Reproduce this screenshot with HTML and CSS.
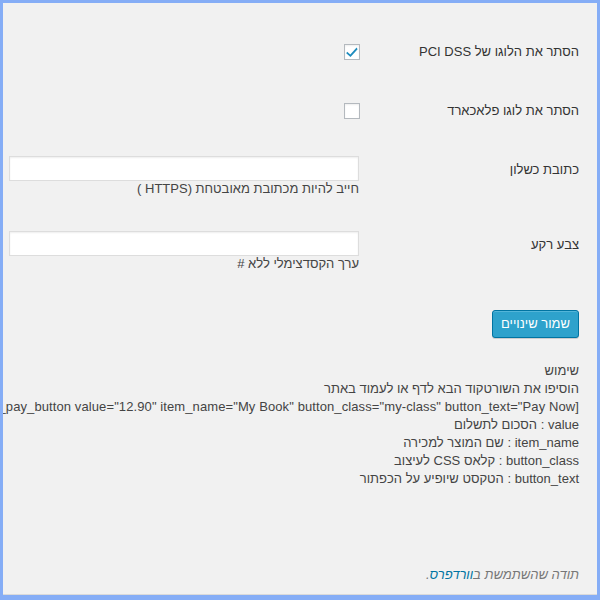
FILE: index.html
```html
<!DOCTYPE html>
<html lang="he" dir="rtl">
<head>
<meta charset="utf-8">
<link rel="stylesheet" href="styles.css">
</head>
<body>
<div class="frame">
  <div class="wrap">
    <div class="row check-row">
      <div class="label">הסתר את הלוגו של PCI DSS</div>
      <div class="field">
        <span class="checkbox">
          <svg width="14" height="14" viewBox="0 0 14 14"><path d="M2.2 6.8 L5.3 9.6 L11.6 2.6 L12.6 4.2 L5.5 12.1 L1.2 8.3 Z" fill="#1e8cbe"/></svg>
        </span>
      </div>
    </div>
    <div class="row check-row">
      <div class="label">הסתר את לוגו פלאכארד</div>
      <div class="field"><span class="checkbox"></span></div>
    </div>
    <div class="row text-row">
      <div class="label text-label">כתובת כשלון</div>
      <div class="field">
        <span class="input"></span>
        <p class="description">חייב להיות מכתובת מאובטחת (HTTPS )</p>
      </div>
    </div>
    <div class="row text-row">
      <div class="label text-label">צבע רקע</div>
      <div class="field">
        <span class="input"></span>
        <p class="description">ערך הקסדצימלי ללא #</p>
      </div>
    </div>
    <div class="submit">
      <span class="button-primary">שמור שינויים</span>
    </div>
    <div class="usage">
      <p>שימוש</p>
      <p>הוסיפו את השורטקוד הבא לדף או לעמוד באתר</p>
      <p class="code">[pelecard_pay_button value="12.90" item_name="My Book" button_class="my-class" button_text="Pay Now"]</p>
      <p>value : הסכום לתשלום</p>
      <p>item_name : שם המוצר למכירה</p>
      <p>button_class : קלאס CSS לעיצוב</p>
      <p>button_text : הטקסט שיופיע על הכפתור</p>
    </div>
  </div>
  <div class="footer">
    <p>תודה שהשתמשת ב<a href="#">וורדפרס</a>.</p>
  </div>
</div>
</body>
</html>
```
FILE: styles.css
```css
html, body {
  margin: 0;
  padding: 0;
  height: 600px;
  overflow: hidden;
}
body {
  background: #85adf6;
  font-family: "Liberation Sans", Arial, sans-serif;
  color: #444;
}
.frame {
  margin: 3px 3px 0 3px;
  height: 591px;
  background: #f1f1f1;
  border-bottom: 1px solid #dadada;
  display: flex;
  flex-direction: column;
  overflow: hidden;
}
.wrap {
  padding: 20px 18px 0 6px;
}
.row {
  display: grid;
  grid-template-columns: 210px 350px;
  column-gap: 10px;
}
.label {
  font-size: 13px;
  line-height: 16px;
  color: #333;
}
.check-row {
  padding: 21px 0 22px;
  align-items: center;
}
.checkbox {
  display: block;
  width: 14px;
  height: 14px;
  border: 1px solid #b4b9be;
  background: #fff;
  box-shadow: inset 0 1px 2px rgba(0,0,0,.07);
  margin-right: -1px;
}
.checkbox svg {
  display: block;
}
.text-row {
  padding: 15px 0 19px;
}
.text-label {
  padding-top: 5px;
  line-height: 18px;
}
.input {
  display: block;
  height: 23px;
  border: 1px solid #ddd;
  background: #fff;
  box-shadow: inset 0 1px 2px rgba(0,0,0,.07);
}
.description {
  margin: 0;
  font-size: 13px;
  line-height: 16px;
  color: #444;
}
.submit {
  padding: 19px 0 0;
  display: flex;
}
.button-primary {
  display: block;
  height: 26px;
  line-height: 25px;
  padding: 0 8px;
  font-size: 13px;
  color: #fff;
  background: #2ea2cc;
  border: 1px solid #0074a2;
  border-radius: 3px;
  box-shadow: inset 0 1px 0 rgba(120,200,230,.5), 0 1px 0 rgba(0,0,0,.15);
}
.usage {
  margin-top: 24px;
}
.usage p {
  margin: 0;
  font-size: 13px;
  line-height: 18px;
  color: #444;
  white-space: nowrap;
}
.usage .code {
  letter-spacing: 0.1px;
}
.footer {
  margin-top: auto;
  padding: 0 18px 10px 6px;
}
.footer p {
  margin: 0;
  font-size: 13px;
  line-height: 18px;
  font-style: italic;
  color: #777;
}
.footer a {
  color: #0074a2;
  text-decoration: none;
}
```
